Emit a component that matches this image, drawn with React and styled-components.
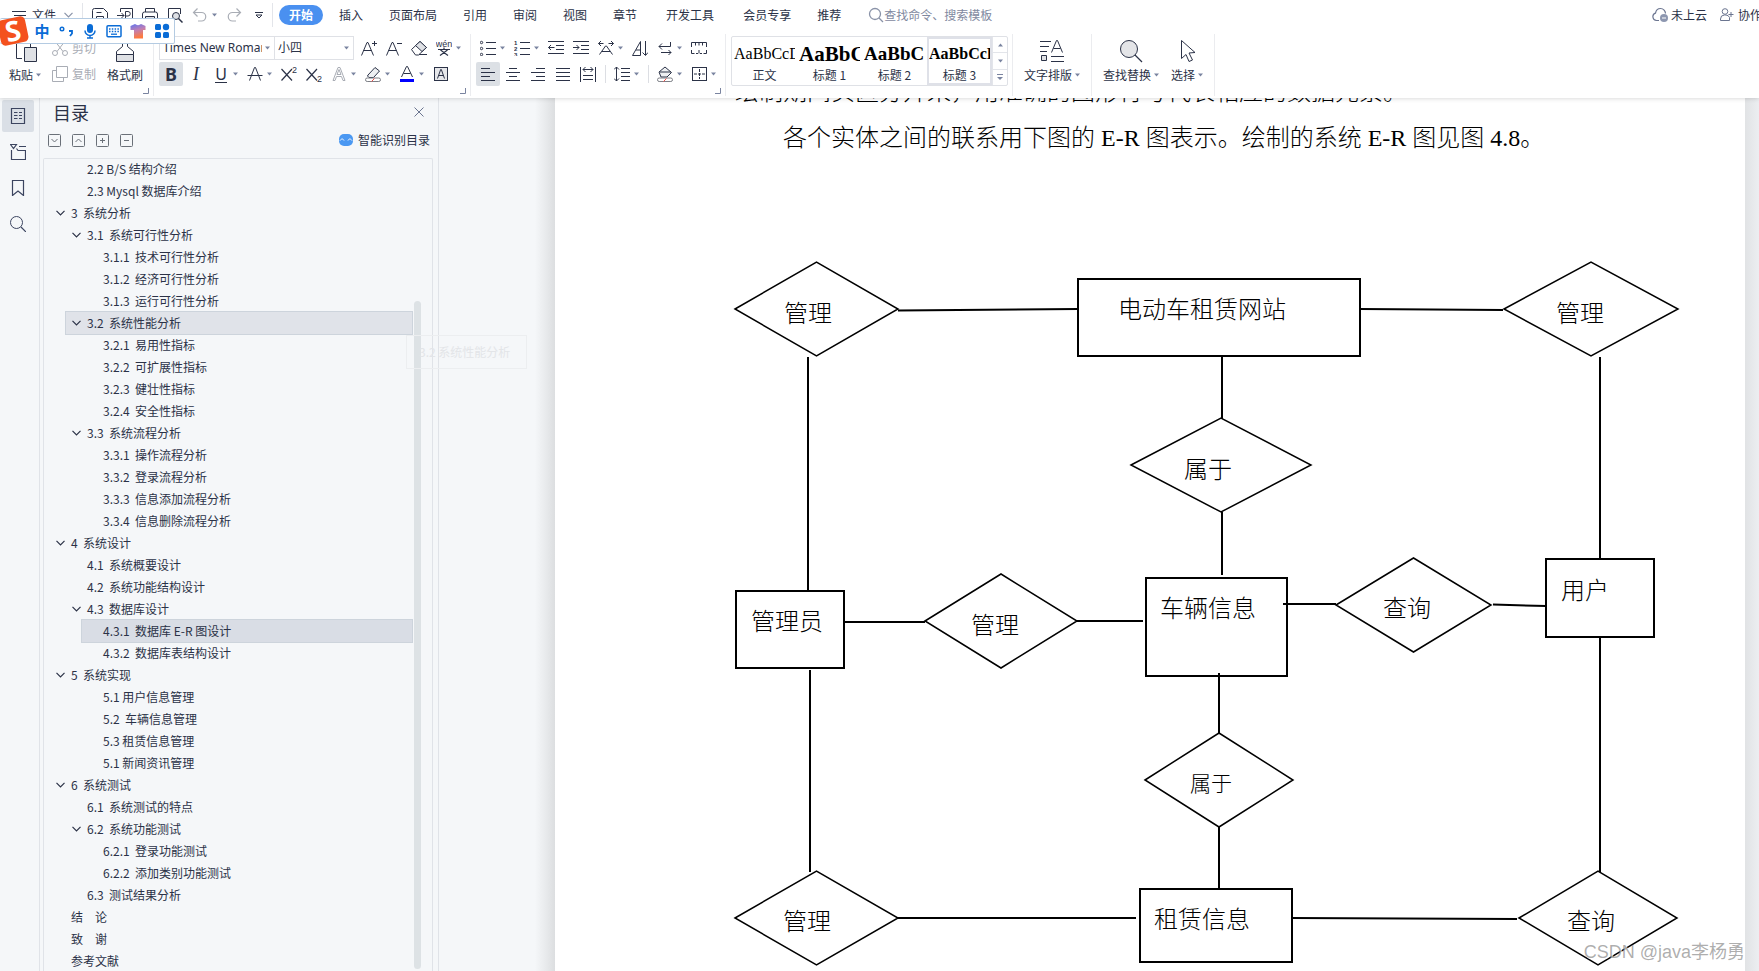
import React from 'react';
import styled, { createGlobalStyle } from 'styled-components';

const INK = '#2b3247';
const MUTED = '#a9adb5';
const UI_FONT = '"Noto Sans CJK SC", sans-serif';

/* ---------- icons ---------- */

const Svg = ({ size = 16, w, h, color = INK, children }) => (
    <svg
        width={w || size}
        height={h || size}
        viewBox={`0 0 ${w || size} ${h || size}`}
        fill="none"
        stroke={color}
        strokeWidth="1"
        aria-hidden="true"
    >
        {children}
    </svg>
);

const Caret = () => (
    <svg width="5" height="4" viewBox="0 0 5 4" aria-hidden="true">
        <path d="M0 0.5h5L2.5 3.5z" fill="#7a84a0" />
    </svg>
);

const Chevron = ({ color = INK }) => (
    <Svg w={9} h={6} color={color}><path d="M0.5 0.8l4 4 4-4" strokeWidth="1.2" /></Svg>
);

const icons = {
    menu: <Svg w={14} h={10}><path d="M0 1.5h14M2 5.5h12M0 9.5h14" /></Svg>,
    save: <Svg><path d="M0.5 15.5V3.5a2 2 0 0 1 2-2h9l4 4v10zM4.5 5.5h5M4.5 15V9.5h7V15" /></Svg>,
    exportPdf: <Svg><path d="M3.5 5V1.5h12v14h-12V12M0 8.5h7M4.5 6l2.5 2.5L4.5 11M8.5 12V4.5h2.5a2 2 0 0 1 0 4.5H8.5" /></Svg>,
    print: <Svg><path d="M3.5 5V1.5h9V5M3.5 12h-3V7a2 2 0 0 1 2-2h11a2 2 0 0 1 2 2v5h-3" /><path d="M3.5 9.5h9v6h-9z" fill="#dfe1e5" /></Svg>,
    preview: <Svg><path d="M13.5 7V1.5H1.5v13H7" /><circle cx="9" cy="9" r="3.5" fill="#dfe1e5" /><path d="M11.5 11.5l4 4" strokeWidth="1.5" /></Svg>,
    undo: <Svg color={MUTED}><path d="M5.5 1.5L1.5 5.5l4 4M1.5 5.5h8a4 4 0 0 1 0 8.5H6" strokeWidth="1.2" /></Svg>,
    redo: <Svg color={MUTED}><path d="M10.5 1.5l4 4-4 4M14.5 5.5h-8a4 4 0 0 0 0 8.5H10" strokeWidth="1.2" /></Svg>,
    more: <Svg w={8} h={7}><path d="M0 0.5h8M1 3l3 3 3-3z" /></Svg>,
    grow: <Svg><path d="M0.5 15.5L6 2.500h1l5.500 13M2.500 10.500h8M11 3.500h5M13.500 1v5" /></Svg>,
    shrink: <Svg><path d="M0.5 15.5L6 2.5h1l5.500 13M2.500 10.500h8M11 3.500h5" /></Svg>,
    eraser: <Svg><path d="M0.5 9.5L9 1.5l6.500 6-8 7.500H4.500z" /><path d="M9 1.5l6.500 6-4.500 4-6.500-6z" fill="#dfe1e5" /><path d="M8 14.5h8" /></Svg>,
    strike: <Svg><path d="M2.5 14.5L7.5 1.5h1l5 13M0.5 9.5h15" /></Svg>,
    highlight: <Svg><path d="M3 9l7-7.5L14.5 5l-6 6.5H4L2.5 10z" fill="#eef0f2" /><rect x="0.5" y="12" width="15" height="3.5" rx="1.7" stroke="#7d7f86" /><path d="M6.5 15.5l3-3" stroke="#f0504a" /></Svg>,
    fontColor: <Svg><path d="M2.5 11L7.5 0.5h1l5 10.5M4.5 7.5h7" /><path d="M1 14.5h14" stroke="#0000ff" strokeWidth="3" /></Svg>,
    boxedA: <Svg><rect x="1.5" y="1.5" width="13" height="13" fill="#e6e7ea" /><path d="M4.5 12.5l3.2-9h0.6l3.2 9M5.5 9.5h5" /></Svg>,
    outlineA: <Svg color={MUTED}><path d="M2 14.5L7 1.5h2l5 13h-2l-1.5-4h-5l-1.500 4zM6 8.500h4L8 3.500z" /></Svg>,
    bullets: <Svg><path d="M6 2.5h10M6 8.5h10M6 14.5h10" /><circle cx="1.5" cy="2.5" r="1.2" /><circle cx="1.5" cy="8.5" r="1.2" /><circle cx="1.5" cy="14.5" r="1.2" /></Svg>,
    outdent: <Svg><path d="M0 1.5h16M8 5.5h8M8 9.5h8M0 13.5h16M0.5 7.5h6M3 5L0.5 7.5 3 10" /></Svg>,
    indent: <Svg><path d="M0 1.5h16M8 5.5h8M8 9.5h8M0 13.5h16M0 7.5h6M3.5 5L6 7.5 3.5 10" /></Svg>,
    asian: <Svg><path d="M0.5 3.5h5M3 1L0.5 3.5 3 6M10.5 3.5h5M13 1l2.5 2.5L13 6M1.5 14.5L7.5 6h1l6 8.5M4 11.5h8" /></Svg>,
    sort: <Svg><path d="M0.5 15.5L8.5 1.5v14zM4 10h4.5M13.5 1v14M10.500 12.500l3 3 2.500-3" /></Svg>,
    wrap: <Svg><path d="M13.5 2v4.5H2M5 3.5l-3 3 3 3M4 12.5h10M11.5 10l2.5 2.5-2.500 2.500" /></Svg>,
    ruler: <Svg><path d="M0.5 7V2.5h15V7M4.5 2.5v3M8 2.5v3M11.5 2.5v3M0.5 10v3.5M15.5 10v3.5M0.5 13.5h3M5 13.5h2M9 13.5h2M12.5 13.5h3M8 10v3.5" /></Svg>,
    left: <Svg><path d="M1 2.5h9M1 6.5h14M1 10.5h9M1 14.5h14" /></Svg>,
    center: <Svg><path d="M4 2.5h8M1 6.5h14M4 10.5h8M1 14.5h14" /></Svg>,
    right: <Svg><path d="M6 2.5h9M1 6.5h14M6 10.5h9M1 14.5h14" /></Svg>,
    justify: <Svg><path d="M1 2.5h14M1 6.5h14M1 10.5h14M1 14.5h14" /></Svg>,
    distribute: <Svg><path d="M0.5 1v15M15.5 1v15M3 3.5h10M5.5 1L3 3.5 5.5 6M10.5 1L13 3.5 10.5 6M3 9.5h10M3 13.5h10" /></Svg>,
    spacing: <Svg><path d="M2.5 1v14M0 3.5L2.5 1 5 3.5M0 12.5L2.5 15 5 12.5M7 2.5h9M7 6.5h9M7 10.5h9M7 14.5h9" /></Svg>,
    fill: <Svg><path d="M2 6l6-5 6.5 5.5L10 11H4zM3 6h11" fill="#eef0f2" /><rect x="0.5" y="12" width="15" height="3.5" rx="1.7" stroke="#7d7f86" /><path d="M6.5 15.5l3-3" stroke="#f0504a" /></Svg>,
    borders: <Svg><rect x="1.5" y="1.5" width="14" height="13" /><path d="M8.5 3v10M3 8h11" strokeDasharray="3 1" /></Svg>,
    cut: <Svg color={MUTED}><path d="M2.5 0.5l8.5 11M13.5 0.5L5 11.5" /><circle cx="3" cy="13" r="2.5" /><circle cx="13" cy="13" r="2.5" /></Svg>,
    copy: <Svg color={MUTED}><path d="M4.5 0.5h11v11h-11z" /><path d="M4.5 4.5h-4v11h11v-4" /></Svg>,
    paste: <Svg size={24}><path d="M9 19.5H3.5v-17h14V8" /><path d="M11.5 8.5h12v14h-12z" fill="#dfe1e5" /></Svg>,
    brush: <Svg size={24}><path d="M9.5 1v6.5l-6 5v3h17v-3l-6-5V1" /><path d="M3.5 15.5h17v7h-17z" fill="#dfe1e5" /></Svg>,
    typeset: <Svg size={24}><path d="M0 2.5h11M0 7.5h9M0 12.5h7M11 22.5h13M11 17.5h13M11.5 13.5l5-12h1l5 12M13.5 9.5h7" /><path d="M1.5 16.5h5v5h-5z" fill="#dfe1e5" /></Svg>,
    find: <Svg size={24}><circle cx="10" cy="10" r="8.5" fill="#e4e5e8" /><path d="M16 16l7 7" strokeWidth="1.3" /></Svg>,
    select: <Svg size={24}><path d="M6.500 1.500v18l4.500-4 3 7 3.500-1.500-3.500-7 6-0.500z" /></Svg>,
    search: <Svg color="#8a93a8"><circle cx="7" cy="7" r="5.5" strokeWidth="1.3" /><path d="M11 11l4 4" strokeWidth="1.3" /></Svg>,
    cloud: <Svg color="#6b7590"><path d="M7 13.5H4.5a3.8 3.8 0 0 1-1-7.4C4 3.5 6 1.5 8.5 1.5c3 0 5 2.5 5 5" strokeWidth="1.2" /><circle cx="12" cy="11" r="4" fill="#8d97b0" stroke="none" /><path d="M10 11h4" stroke="#fff" /></Svg>,
    people: <Svg color="#6b7590"><circle cx="6" cy="4.5" r="2.8" /><path d="M9 13.5H1.5V12a4 4 0 0 1 4-4H7a4 4 0 0 1 3.5 2.5v3H9M9.5 7.5h5M12 5v5" /></Svg>,
    outline: <Svg color="#3c4560"><path d="M1.5 0.5h13v15h-13zM4 4.5h3.5M9 4.5h3M4 7.5h3.5M9 7.5h3M4 10.5h3.5M9 10.5h3" strokeWidth="1.2" /></Svg>,
    chapter: <Svg color="#3c4560"><path d="M0.5 0.5h6l-3 4zM1.5 6v9.5h14v-9H8l-1.5-2M9 2.5h7" strokeWidth="1.2" /></Svg>,
    bookmark: <Svg color="#3c4560"><path d="M2.5 0.5h11v15L8 11l-5.5 4.5z" strokeWidth="1.2" /></Svg>,
    magnify: <Svg color="#3c4560"><circle cx="6.5" cy="6.5" r="6" /><path d="M11 11l5 5" strokeWidth="1.2" /></Svg>,
    close: <Svg size={10} color="#6b7590"><path d="M0.5 0.5l9 9M9.5 0.5l-9 9" /></Svg>,
};

const Numbered = () => (
    <Svg>
        <path d="M6 2.5h10M6 8.5h10M6 14.5h10" />
        <g fill={INK} stroke="none" fontFamily="Liberation Sans" fontSize="6" fontWeight="700">
            <text x="0" y="5">1</text>
            <text x="0" y="11">2</text>
            <text x="0" y="17">3</text>
        </g>
    </Svg>
);

const Script = ({ y }) => (
    <Svg>
        <path d="M0.5 3l10.5 11.5M11 3L0.5 14.5" strokeWidth="1.2" />
        <text x="11" y={y} fill={INK} stroke="none" fontFamily="Liberation Sans" fontSize="9">2</text>
    </Svg>
);

const Pinyin = () => (
    <Svg>
        <text x="8" y="7" fill={INK} stroke="none" textAnchor="middle" fontFamily="Liberation Sans" fontSize="9">wén</text>
        <path d="M2 9.5h12M8 7.500v2M4.500 10l7.500 5.500M11.500 10L4 15.500" strokeWidth="1.200" />
    </Svg>
);

const FoldIcon = ({ d }) => (
    <Svg size={13} color="#6a7078"><rect x="0.5" y="0.5" width="12" height="12" rx="1" /><path d={d} /></Svg>
);

const SmartIcon = () => (
    <Svg w={14} h={12}>
        <rect width="14" height="12" rx="5" fill="#4a98f2" stroke="none" />
        <path d="M1 6.5c1.5-2 3-2 4 0M9 6.5c1-2 2.5-2 4 0" stroke="#fff" />
    </Svg>
);

const ImeLogo = () => (
    <svg width="30" height="32" viewBox="0 0 30 32" aria-hidden="true">
        <g transform="rotate(-12 13 16)">
            <rect x="-1" y="3" width="28" height="26" rx="5" fill="#f4511e" />
            <text x="13" y="26" fill="#fff" textAnchor="middle" fontFamily="Noto Sans" fontWeight="700" fontSize="28">S</text>
        </g>
    </svg>
);

const imeTools = [
    { label: '标点', icon: <Svg color="#0a6cd6"><circle cx="4" cy="6" r="1.8" strokeWidth="1.4" /><path d="M11 8h3v2.5L12 13" strokeWidth="1.8" /></Svg> },
    { label: '语音', icon: <Svg color="#0a6cd6"><rect x="5" y="1" width="6" height="9" rx="3" fill="#0a6cd6" stroke="none" /><path d="M3 7.5a5 5 0 0 0 10 0M8 12.5V15M5 15h6" strokeWidth="1.5" /></Svg> },
    { label: '键盘', icon: <Svg color="#0a6cd6"><rect x="1" y="2.7" width="14" height="11" rx="1" strokeWidth="1.5" /><path d="M3 6h10M3 8.5h10" strokeWidth="1.5" strokeDasharray="1.5 1.3" /><path d="M5 11.2h6" strokeWidth="1.3" /></Svg> },
    {
        label: '皮肤',
        icon: (
            <Svg>
                <defs>
                    <linearGradient id="shirt" x1="0" y1="0" x2="0.3" y2="1">
                        <stop offset="0" stopColor="#5b74f0" />
                        <stop offset="0.5" stopColor="#c07fb4" />
                        <stop offset="1" stopColor="#ff7a3d" />
                    </linearGradient>
                </defs>
                <path d="M5 1c1.5 1.5 4.5 1.5 6 0l4.5 2v4H13v8.5H4V7H0.5V3z" fill="url(#shirt)" stroke="none" />
            </Svg>
        ),
    },
    {
        label: '工具箱',
        icon: (
            <Svg>
                <g fill="#0a6cd6" stroke="none">
                    <rect x="1" y="1" width="6" height="6" rx="1.5" />
                    <circle cx="12" cy="4" r="3.2" />
                    <rect x="1" y="9" width="6" height="6" rx="1.5" />
                    <rect x="9" y="9" width="6" height="6" rx="1.5" />
                </g>
            </Svg>
        ),
    },
];

/* ---------- data ---------- */

const tabs = ['开始', '插入', '页面布局', '引用', '审阅', '视图', '章节', '开发工具', '会员专享', '推荐'];

const quickTools = [
    { label: '保存', icon: icons.save },
    { label: '输出为PDF', icon: icons.exportPdf },
    { label: '打印', icon: icons.print },
    { label: '打印预览', icon: icons.preview },
    { label: '撤销', icon: icons.undo, split: true },
    { label: '恢复', icon: icons.redo },
    { label: '更多', icon: icons.more },
];

const fontTop = [
    { label: '增大字号', icon: icons.grow },
    { label: '减小字号', icon: icons.shrink },
    { label: '清除格式', icon: icons.eraser },
    { label: '拼音指南', icon: <Pinyin />, split: true },
];

const fontBottom = [
    { label: '加粗', letter: 'B', active: true },
    { label: '倾斜', letter: 'I' },
    { label: '下划线', letter: 'U', split: true },
    { label: '删除线', icon: icons.strike, split: true },
    { label: '上标', icon: <Script y={7} /> },
    { label: '下标', icon: <Script y={16} /> },
    { label: '文字效果', icon: icons.outlineA, split: true },
    { label: '突出显示', icon: icons.highlight, split: true },
    { label: '字体颜色', icon: icons.fontColor, split: true },
    { label: '字符底纹', icon: icons.boxedA },
];

const paragraphTop = [
    { label: '项目符号', icon: icons.bullets, split: true },
    { label: '编号', icon: <Numbered />, split: true },
    { label: '减少缩进', icon: icons.outdent },
    { label: '增加缩进', icon: icons.indent },
    { label: '中文版式', icon: icons.asian, split: true },
    { label: '排序', icon: icons.sort },
    { label: '显示标记', icon: icons.wrap, split: true },
    { label: '制表位', icon: icons.ruler },
];

const paragraphBottom = [
    { label: '左对齐', icon: icons.left, active: true },
    { label: '居中对齐', icon: icons.center },
    { label: '右对齐', icon: icons.right },
    { label: '两端对齐', icon: icons.justify },
    { label: '分散对齐', icon: icons.distribute },
    { divider: true },
    { label: '行距', icon: icons.spacing, split: true },
    { divider: true },
    { label: '底纹颜色', icon: icons.fill, split: true },
    { label: '边框', icon: icons.borders, split: true },
];

const textStyles = [
    { name: '正文', sample: 'AaBbCcD', size: 16, weight: 400 },
    { name: '标题 1', sample: 'AaBbC', size: 21, weight: 700 },
    { name: '标题 2', sample: 'AaBbC', size: 19, weight: 700 },
    { name: '标题 3', sample: 'AaBbCcD', size: 16, weight: 700, active: true },
];

const outline = [
    { level: 2, text: '2.2 B/S 结构介绍' },
    { level: 2, text: '2.3 Mysql 数据库介绍' },
    { level: 1, text: '3  系统分析', open: true },
    { level: 2, text: '3.1  系统可行性分析', open: true },
    { level: 3, text: '3.1.1  技术可行性分析' },
    { level: 3, text: '3.1.2  经济可行性分析' },
    { level: 3, text: '3.1.3  运行可行性分析' },
    { level: 2, text: '3.2  系统性能分析', open: true, state: 'hover' },
    { level: 3, text: '3.2.1  易用性指标' },
    { level: 3, text: '3.2.2  可扩展性指标' },
    { level: 3, text: '3.2.3  健壮性指标' },
    { level: 3, text: '3.2.4  安全性指标' },
    { level: 2, text: '3.3  系统流程分析', open: true },
    { level: 3, text: '3.3.1  操作流程分析' },
    { level: 3, text: '3.3.2  登录流程分析' },
    { level: 3, text: '3.3.3  信息添加流程分析' },
    { level: 3, text: '3.3.4  信息删除流程分析' },
    { level: 1, text: '4  系统设计', open: true },
    { level: 2, text: '4.1  系统概要设计' },
    { level: 2, text: '4.2  系统功能结构设计' },
    { level: 2, text: '4.3  数据库设计', open: true },
    { level: 3, text: '4.3.1  数据库 E-R 图设计', state: 'current' },
    { level: 3, text: '4.3.2  数据库表结构设计' },
    { level: 1, text: '5  系统实现', open: true },
    { level: 3, text: '5.1 用户信息管理' },
    { level: 3, text: '5.2  车辆信息管理' },
    { level: 3, text: '5.3 租赁信息管理' },
    { level: 3, text: '5.1 新闻资讯管理' },
    { level: 1, text: '6  系统测试', open: true },
    { level: 2, text: '6.1  系统测试的特点' },
    { level: 2, text: '6.2  系统功能测试', open: true },
    { level: 3, text: '6.2.1  登录功能测试' },
    { level: 3, text: '6.2.2  添加类别功能测试' },
    { level: 2, text: '6.3  测试结果分析' },
    { level: 1, text: '结　论' },
    { level: 1, text: '致　谢' },
    { level: 1, text: '参考文献' },
];

// x, y, w, h of the shape, then where its label starts
const entities = [
    { name: '电动车租赁网站', x: 343, y: 118, w: 282, h: 77, tx: 383, ty: 148 },
    { name: '管理员', x: 1, y: 430, w: 108, h: 77, tx: 16, ty: 460 },
    { name: '车辆信息', x: 411, y: 417, w: 141, h: 98, tx: 425, ty: 447 },
    { name: '用户', x: 811, y: 398, w: 108, h: 78, tx: 826, ty: 429 },
    { name: '租赁信息', x: 405, y: 728, w: 152, h: 73, tx: 419, ty: 758 },
];

const relations = [
    { name: '管理', x: 0, y: 101, w: 163, h: 94, tx: 49, ty: 152 },
    { name: '管理', x: 769, y: 101, w: 174, h: 94, tx: 821, ty: 152 },
    { name: '属于', x: 396, y: 257, w: 180, h: 94, tx: 449, ty: 308 },
    { name: '管理', x: 190, y: 413, w: 152, h: 94, tx: 236, ty: 464 },
    { name: '查询', x: 601, y: 397, w: 155, h: 94, tx: 648, ty: 447 },
    { name: '属于', x: 410, y: 572, w: 148, h: 94, tx: 455, ty: 622, small: true },
    { name: '管理', x: 0, y: 710, w: 163, h: 94, tx: 48, ty: 760 },
    { name: '查询', x: 784, y: 710, w: 158, h: 94, tx: 832, ty: 760 },
];

const edges = [
    'M163 149.500L343 148', 'M625 148L768 149', 'M73 196V430', 'M487 196V258', 'M487 351V414',
    'M865 196V398', 'M109 461H190', 'M342 460H408', 'M548 443H601', 'M758 443.500L811 445',
    'M75 509V711', 'M865 476V711', 'M484 512V572', 'M484 665V728', 'M163 757H401', 'M557 757L782 758',
];

/* ---------- parts ---------- */

const Tool = ({ tool }) => {
    if (tool.divider) return <ToolDivider />;
    return (
        <ToolButton type="button" aria-label={tool.label} $active={tool.active}>
            <span className="icon">
                {tool.letter ? <Letter $kind={tool.letter}>{tool.letter}</Letter> : tool.icon}
            </span>
            {tool.split && <Caret />}
        </ToolButton>
    );
};

const Tools = ({ items }) => items.map((tool, i) => <Tool tool={tool} key={i} />);

const Big = ({ icon, label, caret = true }) => (
    <BigButton type="button">
        {icon}
        <span className="label">{label}{caret && <Caret />}</span>
    </BigButton>
);

const Corner = () => (
    <CornerButton type="button" aria-label="更多设置">
        <Svg size={6} color="#7a84a0"><path d="M0 5.5h5.5V0" /></Svg>
    </CornerButton>
);

function Ribbon() {
    return (
        <RibbonBox>
            <TabRow>
                <FileButton type="button">{icons.menu}<span>文件</span><Chevron color="#8a93a8" /></FileButton>
                <QuickBar><Tools items={quickTools} /></QuickBar>
                <Tabs>
                    {tabs.map((tab, i) => (
                        <Tab href="#" key={tab} $active={i === 0} $wide={tab === '开发工具'}>{tab}</Tab>
                    ))}
                </Tabs>
                <SearchBox>
                    {icons.search}
                    <input type="text" aria-label="查找" placeholder="查找命令、搜索模板" />
                </SearchBox>
                <Account>
                    <a href="#">{icons.cloud}未上云</a>
                    <a href="#">{icons.people}协作</a>
                </Account>
            </TabRow>
            <GroupRow>
                <ClipboardGroup>
                    <Big icon={icons.paste} label="粘贴" />
                    <Stack>
                        <MutedButton type="button" disabled>{icons.cut}剪切</MutedButton>
                        <MutedButton type="button" disabled>{icons.copy}复制</MutedButton>
                    </Stack>
                    <Big icon={icons.brush} label="格式刷" caret={false} />
                    <Corner />
                </ClipboardGroup>
                <Group>
                    <Stack>
                        <ToolRow>
                            <Combo $width={116}>
                                <select aria-label="字体" defaultValue="tnr">
                                    <option value="tnr">Times New Roman</option>
                                </select>
                                <Caret />
                            </Combo>
                            <Combo $width={80} $last>
                                <select aria-label="字号" defaultValue="12">
                                    <option value="12">小四</option>
                                </select>
                                <Caret />
                            </Combo>
                            <Tools items={fontTop} />
                        </ToolRow>
                        <ToolRow><Tools items={fontBottom} /></ToolRow>
                    </Stack>
                    <Corner />
                </Group>
                <Group>
                    <Stack>
                        <ToolRow><Tools items={paragraphTop} /></ToolRow>
                        <ToolRow><Tools items={paragraphBottom} /></ToolRow>
                    </Stack>
                    <Corner />
                </Group>
                <Group>
                    <Gallery>
                        {textStyles.map((style) => (
                            <StyleCard type="button" key={style.name} $active={style.active} $size={style.size} $weight={style.weight}>
                                <span className="sample">{style.sample}</span>
                                <span className="name">{style.name}</span>
                            </StyleCard>
                        ))}
                        <Spinner>
                            <button type="button" aria-label="上一行"><Svg w={5} h={4}><path d="M0 3.5h5L2.5 0.5z" fill="#7a84a0" stroke="none" /></Svg></button>
                            <button type="button" aria-label="下一行"><Caret /></button>
                            <button type="button" aria-label="展开"><Svg w={6} h={6} color="#7a84a0"><path d="M0 0.5h6" /><path d="M0 3h6L3 6z" fill="#7a84a0" stroke="none" /></Svg></button>
                        </Spinner>
                    </Gallery>
                </Group>
                <WideGroup><Big icon={icons.typeset} label="文字排版" /></WideGroup>
                <WideGroup>
                    <Big icon={icons.find} label="查找替换" />
                    <Big icon={icons.select} label="选择" />
                </WideGroup>
            </GroupRow>
            <ImeBar>
                <ImeLogo />
                <button type="button">中</button>
                {imeTools.map((tool) => (
                    <button type="button" aria-label={tool.label} key={tool.label}>{tool.icon}</button>
                ))}
            </ImeBar>
        </RibbonBox>
    );
}

function Sidebar() {
    return (
        <>
            <Rail>
                <RailButton type="button" aria-label="目录" $active>{icons.outline}</RailButton>
                <RailButton type="button" aria-label="章节">{icons.chapter}</RailButton>
                <RailButton type="button" aria-label="书签">{icons.bookmark}</RailButton>
                <RailButton type="button" aria-label="查找">{icons.magnify}</RailButton>
            </Rail>
            <Panel>
                <PanelHead>
                    <h2>目录</h2>
                    <button type="button" aria-label="关闭">{icons.close}</button>
                </PanelHead>
                <PanelTools>
                    <button type="button" aria-label="展开"><FoldIcon d="M3.5 5l3 3 3-3" /></button>
                    <button type="button" aria-label="收起"><FoldIcon d="M3.5 8l3-3 3 3" /></button>
                    <button type="button" aria-label="提升"><FoldIcon d="M4 6.5h5M6.5 4v5" /></button>
                    <button type="button" aria-label="降低"><FoldIcon d="M4 6.5h5" /></button>
                    <a href="#"><SmartIcon />智能识别目录</a>
                </PanelTools>
                <ListBox>
                    <Tree>
                        {outline.map((item, i) => (
                            <TreeItem key={i} $level={item.level} $state={item.state}>
                                <span className="fold">{item.open && <Chevron />}</span>
                                <a href="#">{item.text}</a>
                            </TreeItem>
                        ))}
                    </Tree>
                    <Track><div /></Track>
                </ListBox>
                <Ghost>3.2 系统性能分析</Ghost>
            </Panel>
        </>
    );
}

function Diagram() {
    return (
        <DiagramSvg width="944" height="811" viewBox="0 0 944 811" role="img" aria-label="系统 E-R 图">
            {entities.map((e) => (
                <rect key={e.name} x={e.x} y={e.y} width={e.w} height={e.h} strokeWidth="2" />
            ))}
            {relations.map((r, i) => (
                <path
                    key={i}
                    d={`M${r.x} ${r.y + r.h / 2}L${r.x + r.w / 2} ${r.y}L${r.x + r.w} ${r.y + r.h / 2}L${r.x + r.w / 2} ${r.y + r.h}Z`}
                    strokeWidth="1.5"
                />
            ))}
            {edges.map((d) => <path key={d} d={d} strokeWidth="2" />)}
            {[...entities, ...relations].map((n, i) => (
                <text key={i} x={n.tx} y={n.ty + (n.small ? 8 : 9)} fontSize={n.small ? 21 : 24}>{n.name}</text>
            ))}
        </DiagramSvg>
    );
}

export default function App() {
    return (
        <Shell>
            <GlobalStyle />
            <Ribbon />
            <Workspace>
                <Sidebar />
                <Desk>
                    <Paper>
                        <Line>绘制期间实区分开来，用准确的图形符号代表相应的数据元素。</Line>
                        <Line $indent>各个实体之间的联系用下图的 E-R 图表示。绘制的系统 E-R 图见图 4.8。</Line>
                        <Diagram />
                    </Paper>
                </Desk>
            </Workspace>
            <Watermark>CSDN @java李杨勇</Watermark>
        </Shell>
    );
}

/* ---------- styles ---------- */

const GlobalStyle = createGlobalStyle`
    * {
        box-sizing: border-box;
    }
    body {
        margin: 0;
        font: 12px/20px ${UI_FONT};
        color: ${INK};
    }
    button, input, select {
        margin: 0;
        padding: 0;
        border: 0;
        background: none;
        font: inherit;
        color: inherit;
    }
    a {
        color: inherit;
        text-decoration: none;
    }
    svg {
        display: block;
        flex-shrink: 0;
    }
`;

const Shell = styled.div`
    position: relative;
    display: flex;
    flex-direction: column;
    height: 100vh;
    overflow: hidden;
    background: #f5f7f9;
`;

const RibbonBox = styled.header`
    position: relative;
    z-index: 2;
    flex-shrink: 0;
    background: #fff;
    box-shadow: 0 0 5px rgba(0, 0, 0, 0.2);
`;

const TabRow = styled.div`
    display: flex;
    align-items: center;
    height: 30px;
    overflow: hidden;
    white-space: nowrap;
`;

const FileButton = styled.button`
    display: flex;
    align-items: center;
    width: 82px;
    padding-left: 12px;
    flex-shrink: 0;
    span {
        margin: 0 8px 0 6px;
    }
`;

const QuickBar = styled.div`
    display: flex;
    align-items: center;
    height: 24px;
    padding-left: 5px;
    border: solid #e3e5ea;
    border-width: 0 1px;
`;

const Tabs = styled.nav`
    display: flex;
    padding-left: 3px;
`;

const Tab = styled.a`
    padding: 0 ${({ $active, $wide }) => ($active ? 10 : $wide ? 16 : 13)}px;
    margin: 0 ${({ $active }) => ($active ? 3 : 0)}px;
    border-radius: 10px;
    background: ${({ $active }) => ($active ? '#4a90f0' : 'none')};
    color: ${({ $active }) => ($active ? '#fff' : INK)};
    font-weight: ${({ $active }) => ($active ? 700 : 400)};
`;

const SearchBox = styled.label`
    display: flex;
    align-items: center;
    flex: 1;
    padding-left: 14px;
    input {
        width: 120px;
        outline: 0;
    }
    input::placeholder {
        color: #7f89a0;
        opacity: 1;
    }
`;

const Account = styled.div`
    display: flex;
    gap: 12px;
    width: 107px;
    a {
        display: flex;
        align-items: center;
        gap: 3px;
    }
`;

const GroupRow = styled.div`
    display: flex;
    height: 68px;
    padding: 4px 0 2px;
`;

const Group = styled.div`
    position: relative;
    display: flex;
    flex-shrink: 0;
    padding: 2px 4px 0 5px;
    border-right: 1px solid #ebecef;
`;

const ClipboardGroup = styled(Group)`
    gap: 11px;
    padding: 2px 10px 0 9px;
`;

const WideGroup = styled(Group)`
    gap: 12px;
    padding: 2px 11px 0;
`;

const Stack = styled.div`
    display: flex;
    flex-direction: column;
    gap: 2px;
`;

const ToolRow = styled.div`
    display: flex;
    height: 24px;
`;

const ToolButton = styled.button`
    display: flex;
    align-items: center;
    height: 24px;
    padding-right: 1px;
    .icon {
        display: flex;
        align-items: center;
        justify-content: center;
        width: 24px;
        height: 24px;
        border-radius: 2px;
        background: ${({ $active }) => ($active ? '#dce0e5' : 'none')};
    }
    > svg {
        margin-right: 4px;
    }
`;

const ToolDivider = styled.span`
    width: 1px;
    height: 18px;
    margin: 3px 4px;
    background: #dcdee3;
`;

const Letter = styled.span`
    font-family: ${({ $kind }) => ($kind === 'I' ? '"Liberation Serif", serif' : '"Noto Sans", sans-serif')};
    font-size: ${({ $kind }) => ($kind === 'U' ? 16 : 18)}px;
    font-weight: ${({ $kind }) => ($kind === 'B' ? 700 : 400)};
    font-style: ${({ $kind }) => ($kind === 'I' ? 'italic' : 'normal')};
    line-height: 16px;
    border-bottom: ${({ $kind }) => ($kind === 'U' ? `1px solid ${INK}` : '0')};
`;

const CornerButton = styled.button`
    position: absolute;
    right: 4px;
    bottom: 2px;
`;

const MutedButton = styled.button`
    display: flex;
    align-items: center;
    gap: 4px;
    height: 24px;
    color: ${MUTED};
`;

const BigButton = styled.button`
    display: flex;
    flex-direction: column;
    align-items: center;
    padding-top: 3px;
    .label {
        display: flex;
        align-items: center;
        gap: 3px;
        height: 24px;
    }
`;

const Combo = styled.label`
    display: flex;
    align-items: center;
    width: ${({ $width }) => $width}px;
    height: 24px;
    padding: 0 4px 0 3px;
    margin-right: ${({ $last }) => ($last ? 3 : -1)}px;
    border: 1px solid #dfe1e6;
    select {
        flex: 1;
        min-width: 0;
        margin-right: 3px;
        appearance: none;
        outline: 0;
        font-family: "Noto Sans", ${UI_FONT};
    }
`;

const Gallery = styled.div`
    display: flex;
    height: 50px;
    border: 1px solid #dfe1e6;
    border-radius: 2px;
`;

const StyleCard = styled.button`
    display: flex;
    flex-direction: column;
    width: 65px;
    border: 2px solid ${({ $active }) => ($active ? '#dfe1e8' : 'transparent')};
    .sample {
        width: 100%;
        height: 30px;
        overflow: hidden;
        text-align: left;
        font: ${({ $weight, $size }) => `${$weight} ${$size}px`}/30px "Liberation Serif", serif;
        color: #000;
    }
    .name {
        width: 100%;
        height: 16px;
        line-height: 16px;
        text-align: center;
    }
`;

const Spinner = styled.div`
    display: flex;
    flex-direction: column;
    width: 15px;
    button {
        display: flex;
        align-items: center;
        justify-content: center;
        flex: 1;
        border-left: 1px solid #e3e5ea;
    }
    button + button {
        border-top: 1px solid #e3e5ea;
    }
`;

const ImeBar = styled.div`
    position: absolute;
    top: 18px;
    left: 0;
    display: flex;
    align-items: center;
    width: 175px;
    height: 26px;
    border: 1px solid #b4cbe2;
    border-left: 0;
    border-radius: 2px;
    background: #fff;
    button {
        display: flex;
        align-items: center;
        justify-content: center;
        width: 24px;
        height: 24px;
        color: #0a6cd6;
        font-size: 15px;
        font-weight: 700;
    }
`;

const Workspace = styled.div`
    display: flex;
    flex: 1;
    min-height: 0;
`;

const Rail = styled.div`
    display: flex;
    flex-direction: column;
    gap: 4px;
    width: 40px;
    flex-shrink: 0;
    padding: 2px;
    border-right: 1px solid #e0e3e8;
`;

const RailButton = styled.button`
    display: flex;
    align-items: center;
    justify-content: center;
    width: 32px;
    height: 32px;
    border-radius: 2px;
    background: ${({ $active }) => ($active ? '#dadfe6' : 'none')};
`;

const Panel = styled.aside`
    position: relative;
    display: flex;
    flex-direction: column;
    width: 399px;
    flex-shrink: 0;
    padding: 0 5px 0 3px;
    border-right: 1px solid #e0e3e8;
`;

const PanelHead = styled.div`
    display: flex;
    align-items: center;
    justify-content: space-between;
    height: 28px;
    padding: 0 9px 0 10px;
    h2 {
        margin: 0;
        font-size: 18px;
        font-weight: 400;
    }
`;

const PanelTools = styled.div`
    display: flex;
    align-items: center;
    gap: 11px;
    height: 32px;
    padding: 0 3px 4px 5px;
    a {
        display: flex;
        align-items: center;
        gap: 5px;
        margin-left: auto;
    }
`;

const ListBox = styled.div`
    display: flex;
    flex: 1;
    min-height: 0;
    overflow: hidden;
    border: 1px solid #e0e3e8;
    border-bottom: 0;
    border-radius: 2px 2px 0 0;
`;

const Tree = styled.ul`
    flex: 1;
    margin: -1px 0 0;
    padding: 0;
    list-style: none;
`;

const rowColors = { hover: '#e0e3e9', current: '#d9dde5' };

const TreeItem = styled.li`
    display: flex;
    align-items: center;
    height: 22px;
    margin-left: ${({ $level }) => $level * 16 - 10}px;
    padding-left: 6px;
    background: ${({ $state }) => rowColors[$state] || 'none'};
    box-shadow: ${({ $state }) => ($state ? '0 0 0 1px #cdd4dc' : 'none')};
    white-space: pre;
    .fold {
        width: 15px;
    }
`;

const Track = styled.div`
    display: flex;
    width: 7px;
    margin: 0 11px 0 2px;
    padding: 142px 0 2px;
    div {
        flex: 1;
        border-radius: 4px;
        background: #dde2e5;
    }
`;

const Ghost = styled.div`
    position: absolute;
    top: 237px;
    left: 366px;
    z-index: 1;
    padding: 6px 16px 6px 12px;
    border: 1px solid #eceef0;
    color: #e3e5e8;
    white-space: nowrap;
`;

const Desk = styled.main`
    display: flex;
    flex: 1;
    min-width: 0;
    padding: 0 14px 0 116px;
    background:
        linear-gradient(to left, #eceef1, #e1e3e5) right / 14px 100% no-repeat,
        linear-gradient(to right, transparent 96px, #e9ebed 106px, #dcdee0 116px);
`;

const Paper = styled.article`
    flex: 1;
    min-width: 0;
    padding: 0 0 0 180px;
    background: #fff;
    color: #000;
`;

const Line = styled.p`
    margin: 0;
    font: 24px/46px "Liberation Serif", "Noto Sans CJK SC", serif;
    font-weight: 300;
    text-indent: ${({ $indent }) => ($indent ? 48 : 0)}px;
    white-space: nowrap;
    &:first-child {
        margin-top: -29px;
    }
`;

const DiagramSvg = styled.svg`
    overflow: visible;
    fill: none;
    stroke: #000;
    text {
        fill: #000;
        stroke: none;
        font-family: "Noto Sans CJK SC", sans-serif;
        font-weight: 300;
    }
`;

const Watermark = styled.div`
    position: absolute;
    right: 14px;
    bottom: 7px;
    font: 18px/24px "Liberation Sans", ${UI_FONT};
    color: rgba(120, 120, 120, 0.6);
    text-shadow: 1px 1px 0 rgba(255, 255, 255, 0.8);
`;
